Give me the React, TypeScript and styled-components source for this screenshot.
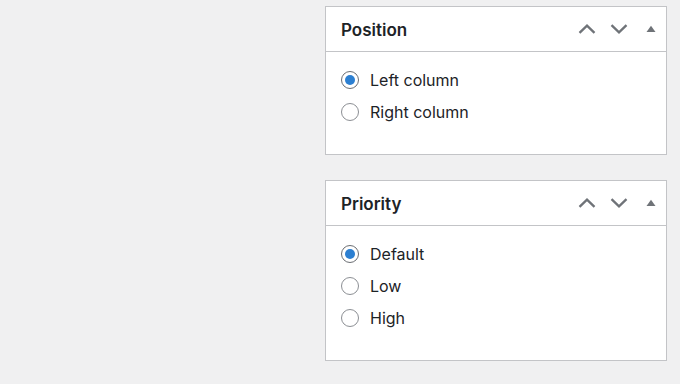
import React from "react";
import styled, { createGlobalStyle } from "styled-components";

const Global = createGlobalStyle`
  html, body { margin: 0; padding: 0; background: #f0f0f1; }
  body { font-family: Inter, "Liberation Sans", sans-serif; color: #1d2327; }
`;

const Page = styled.div`
  display: flex;
  flex-direction: column;
  align-items: flex-end;
  gap: 25px;
  padding: 6px 13px 0 0;
  width: 680px;
  height: 384px;
  box-sizing: border-box;
`;

const Box = styled.section`
  width: 342px;
  box-sizing: border-box;
  background: #fff;
  border: 1px solid #c3c4c7;
`;

const Header = styled.header`
  height: 44px;
  display: flex;
  align-items: center;
  padding: 0 3px 0 15px;
  border-bottom: 1px solid #c3c4c7;
`;

const Title = styled.h2`
  flex: 1;
  margin: 0;
  padding-top: 1px;
  font-size: 17px;
  font-weight: 600;
  color: #1d2327;
`;

const Controls = styled.div`
  display: flex;
  align-items: center;
  gap: 8px;
`;

const IconButton = styled.span`
  width: 24px;
  height: 24px;
  display: flex;
  align-items: center;
  justify-content: center;
  color: #6f7378;
`;

const Body = styled.div`
  padding: 12px 15px 26px;
`;

const Option = styled.label`
  height: 32px;
  display: flex;
  align-items: center;
  gap: 11px;
  font-size: 16px;
  color: #1d2327;
`;

const Radio = styled.span<{ $checked?: boolean }>`
  width: 18px;
  height: 18px;
  box-sizing: border-box;
  border-radius: 50%;
  border: 1px solid ${(p) => (p.$checked ? "#6b6e73" : "#8c8f94")};
  display: flex;
  align-items: center;
  justify-content: center;
  &::after {
    content: "";
    width: 10px;
    height: 10px;
    border-radius: 50%;
    background: ${(p) => (p.$checked ? "#2c7fd1" : "transparent")};
  }
`;

const Up = () => (
  <svg width="18" height="10" viewBox="0 0 18 10">
    <path d="M1.5 8.8 L9 1.6 L16.5 8.8" fill="none" stroke="currentColor" strokeWidth="2.3" />
  </svg>
);
const Down = () => (
  <svg width="18" height="10" viewBox="0 0 18 10">
    <path d="M1.5 1.2 L9 8.4 L16.5 1.2" fill="none" stroke="currentColor" strokeWidth="2.3" />
  </svg>
);
const Tri = () => (
  <svg width="10" height="8" viewBox="0 0 10 8">
    <path d="M0.5 7 L5 0.8 L9.5 7 Z" fill="currentColor" />
  </svg>
);

const Panel = ({ title, options, selected }: { title: string; options: string[]; selected: number }) => (
  <Box>
    <Header>
      <Title>{title}</Title>
      <Controls>
        <IconButton><Up /></IconButton>
        <IconButton><Down /></IconButton>
        <IconButton><Tri /></IconButton>
      </Controls>
    </Header>
    <Body>
      {options.map((o, i) => (
        <Option key={o}>
          <Radio $checked={i === selected} />
          {o}
        </Option>
      ))}
    </Body>
  </Box>
);

export default function App() {
  return (
    <>
      <Global />
      <Page>
        <Panel title="Position" options={["Left column", "Right column"]} selected={0} />
        <Panel title="Priority" options={["Default", "Low", "High"]} selected={0} />
      </Page>
    </>
  );
}
